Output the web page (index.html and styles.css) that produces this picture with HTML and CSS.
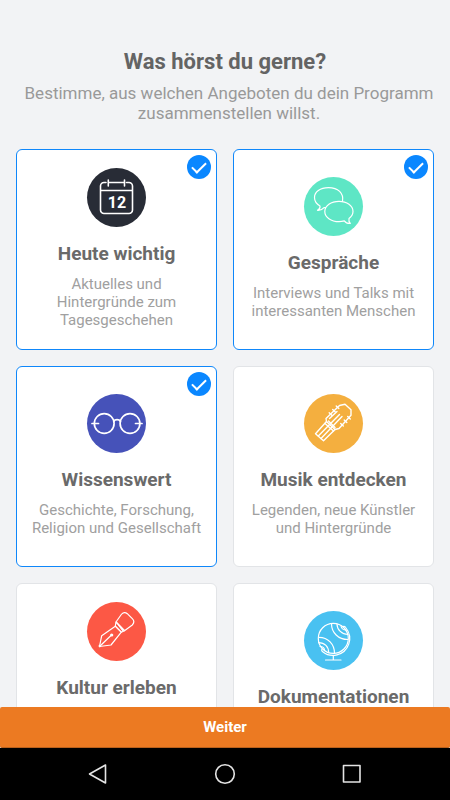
FILE: index.html
```html
<!DOCTYPE html>
<html lang="de">
<head>
    <meta charset="UTF-8">
    <meta name="viewport" content="width=device-width, initial-scale=1.0">
    <title>Was hörst du gerne?</title>
    <link rel="stylesheet" href="styles.css">
</head>
<body>
    <main class="content">
        <header class="intro">
            <h1>Was hörst du gerne?</h1>
            <p>Bestimme, aus welchen Angeboten du dein Programm zusammenstellen willst.</p>
        </header>
        <form id="topics" class="topics">
            <label class="card">
                <input type="checkbox" name="topic" value="heute" checked>
                <svg class="icon dark" viewBox="0 0 59 59" aria-hidden="true">
                    <g stroke-width="1.6">
                        <path d="M19 14.5h-2a3.5 3.5 0 0 0-3.500 3.500v24a3.500 3.500 0 0 0 3.500 3.500h25a3.500 3.500 0 0 0 3.500-3.500v-24a3.500 3.500 0 0 0-3.500-3.500h-2.500M21.500 14.500h16M14 22.500h31M21.300 12v6M37.500 12v6"/>
                    </g>
                    <text x="30" y="40" text-anchor="middle">12</text>
                </svg>
                <span class="title">Heute wichtig</span>
                <span class="text">Aktuelles und Hintergründe zum Tagesgeschehen</span>
            </label>
            <label class="card">
                <input type="checkbox" name="topic" value="gespraeche" checked>
                <svg class="icon mint" viewBox="0 0 59 59" aria-hidden="true">
                    <path d="M38.500 24.500C40 16 34 10.700 24.500 10.700 16 10.700 10.500 15 10.500 20.500c0 3.500 2 6.500 5.500 8.500.3 1.500-.5 3.200-2.500 4.300 3 .3 5-.8 6.500-2.600h1.500"/>
                    <path d="M45 41.500c2.500-2 4-4.500 4-7 0-5.800-6-10.100-14-10.100s-14.200 4.400-14.200 10.100S27 44.700 35 44.700c2 0 3.700-.3 5.300-.8 1.200 1.700 3 2.800 6 2.600-1.300-1.300-1.700-3-1.300-5z"/>
                </svg>
                <span class="title">Gespräche</span>
                <span class="text">Interviews und Talks mit interessanten Menschen</span>
            </label>
            <label class="card">
                <input type="checkbox" name="topic" value="wissen" checked>
                <svg class="icon indigo" viewBox="0 0 59 59" aria-hidden="true">
                    <g stroke-width="1.700">
                        <circle cx="17.200" cy="29.500" r="9.900"/>
                        <circle cx="43" cy="29.500" r="9.900"/>
                        <path d="M26.800 27.500c1-2.500 5.500-2.500 6.600 0M5 29.500h6.500M48.500 29.500H55"/>
                    </g>
                </svg>
                <span class="title">Wissenswert</span>
                <span class="text">Geschichte, Forschung, Religion und Gesellschaft</span>
            </label>
            <label class="card">
                <input type="checkbox" name="topic" value="musik">
                <svg class="icon amber" viewBox="0 0 59 59" aria-hidden="true">
                    <g stroke-width="1.400">
                        <path d="M22.500 27.500 11.500 39.700l8 7L31 35.500z"/>
                        <path d="M22.500 27.500 22 24.500 35.500 11.500l5.500-1.200 6 5.400v5.600L35 34.500l-4 1"/>
                        <path d="M14.300 42 35.500 20.500M17 44.500 38 22.500M25.500 24.500 33 17.500M21 29.500l8.500 7.500M24.500 27l6.500 6.500"/>
                        <path d="M25.200 18.700l2.600 2.600M28.700 15.400l2.600 2.600M32.200 12l2.600 2.600M43.700 22.400l2.600 2.600M40.200 25.900l2.600 2.600M36.700 29.400l2.600 2.600"/>
                    </g>
                </svg>
                <span class="title">Musik entdecken</span>
                <span class="text">Legenden, neue Künstler und Hintergründe</span>
            </label>
            <label class="card">
                <input type="checkbox" name="topic" value="kultur">
                <svg class="icon red" viewBox="0 0 59 59" aria-hidden="true">
                    <path d="M12.500 44.500l2.200-10.800 13.600-9.500 6 6L24 43z"/>
                    <path d="M12.500 44.500 24.500 33M28.300 24.200l.7-4.200 8.500 8.700-3.200 1.500zM30.300 21.300l6 8"/>
                    <path d="M29 20l5.300-7.500c1.700-2.300 4-2.600 6-.8l5 5c2 2 2 4.200 0 6.300l-7.800 5.700z"/>
                    <circle class="dot" cx="24.700" cy="33" r="1.600"/>
                    <circle class="dot" cx="12.800" cy="44" r="1.200"/>
                </svg>
                <span class="title">Kultur erleben</span>
                <span class="text">Literatur, Theater, Kunst und vieles mehr aus der Welt der Kultur</span>
            </label>
            <label class="card">
                <input type="checkbox" name="topic" value="doku">
                <svg class="icon sky" viewBox="0 0 59 59" aria-hidden="true">
                    <circle cx="29.300" cy="27.400" r="15"/>
                    <path d="M39 15.500c1-.5 2 0 2.700 1C50 27 44.500 41 33 43.900c-5 1.200-10 .3-14-2.900-1.200-.8-1.700-1.700-1.200-2.800"/>
                    <path d="M27.500 12.700c0 9 7 15.800 16.300 15.800M33 13.200c0 5.500 5 10.300 11 10.300M37 15c.5 2.500 2.500 4 5 4"/>
                    <path d="M15 26.300c9 0 15.500 7 15.500 16M14.700 31.700c6 0 10 4 10 10M16 35.500c3 0 4.500 1.500 4.500 4"/>
                    <path d="M29.300 44.500V49M21.500 49h15.500"/>
                </svg>
                <span class="title">Dokumentationen</span>
                <span class="text">Reportagen und Features aus aller Welt</span>
            </label>
        </form>
    </main>
    <button type="submit" form="topics" class="next">Weiter</button>
    <nav class="system-bar">
        <button type="button" aria-label="Zurück">
            <svg viewBox="0 0 24 24"><path d="M19.500 3v18L3.500 12z"/></svg>
        </button>
        <button type="button" aria-label="Startseite">
            <svg viewBox="0 0 24 24"><circle cx="12" cy="12" r="9.300"/></svg>
        </button>
        <button type="button" aria-label="Übersicht">
            <svg viewBox="0 0 24 24"><rect x="3.500" y="3.500" width="16.500" height="16.500"/></svg>
        </button>
    </nav>
</body>
</html>
```
FILE: styles.css
```css
* {
    box-sizing: border-box;
}

body {
    display: flex;
    flex-direction: column;
    height: 100vh;
    margin: 0;
    font-family: Roboto, "Liberation Sans", sans-serif;
    background-color: #f2f3f5;
}

.content {
    flex: 1;
    min-height: 0;
    padding: 48px 16px 16px;
    overflow-y: auto;
    scrollbar-width: none;
}

.intro {
    margin-bottom: 26px;
    text-align: center;
}

.intro h1 {
    margin: 0 0 7px;
    color: #646464;
    font-size: 22px;
    line-height: 28px;
}

.intro p {
    margin: 0;
    padding-left: 8px;
    color: #999;
    font-size: 17px;
    line-height: 20px;
}

.topics {
    display: grid;
    grid-template-columns: 1fr 1fr;
    gap: 16px;
}

.card {
    position: relative;
    display: flex;
    flex-direction: column;
    align-items: center;
    justify-content: center;
    aspect-ratio: 1;
    padding: 0 12px 2px;
    border: 1px solid #e2e4e7;
    border-radius: 6px;
    background-color: #fff;
    text-align: center;
    cursor: pointer;
}

.card:has(input:checked) {
    border-color: #0f87fa;
}

.card input {
    appearance: none;
    position: absolute;
    top: 5px;
    right: 5px;
    width: 24px;
    height: 24px;
    margin: 0;
    border-radius: 50%;
}

.card input:checked {
    background-color: #0a87ff;
}

/* Check mark */
.card input:checked::after {
    content: "";
    position: absolute;
    top: 4px;
    left: 8px;
    box-sizing: border-box;
    width: 8px;
    height: 14px;
    border: solid #fff;
    border-width: 0 2px 2px 0;
    transform: rotate(45deg);
}

.icon {
    flex: none;
    width: 59px;
    height: 59px;
    margin-bottom: 15px;
    border-radius: 50%;
    fill: none;
    stroke: #fff;
    stroke-width: 1.2;
    stroke-linecap: round;
    stroke-linejoin: round;
}

.icon text {
    fill: #fff;
    stroke: none;
    font-size: 16px;
    font-weight: bold;
}

.icon .dot {
    fill: #fff;
    stroke: none;
}

.dark { background-color: #282c36; }
.mint { background-color: #5ee6c5; }
.indigo { background-color: #4652b9; }
.amber { background-color: #f4af3f; }
.red { background-color: #fc5845; }
.sky { background-color: #49c1f1; }

.title {
    margin-bottom: 9px;
    color: #6a6a6a;
    font-size: 19px;
    font-weight: bold;
    line-height: 24px;
}

.text {
    color: #a0a0a0;
    font-size: 15px;
    line-height: 18px;
}

.next {
    height: 41px;
    padding: 0;
    border: none;
    border-bottom: 1px solid #b9601c;
    border-radius: 2px;
    background-color: #ec7a22;
    color: #fff;
    font-family: inherit;
    font-size: 15px;
    font-weight: bold;
    cursor: pointer;
}

.system-bar {
    display: grid;
    grid-template-columns: repeat(3, 1fr);
    height: 52px;
    padding: 0 35px;
    background-color: #000;
}

.system-bar button {
    display: flex;
    align-items: center;
    justify-content: center;
    padding: 0;
    border: none;
    background: none;
}

.system-bar svg {
    width: 24px;
    height: 24px;
    fill: none;
    stroke: #e4e4e4;
    stroke-width: 1.6;
    stroke-linejoin: round;
}
```
